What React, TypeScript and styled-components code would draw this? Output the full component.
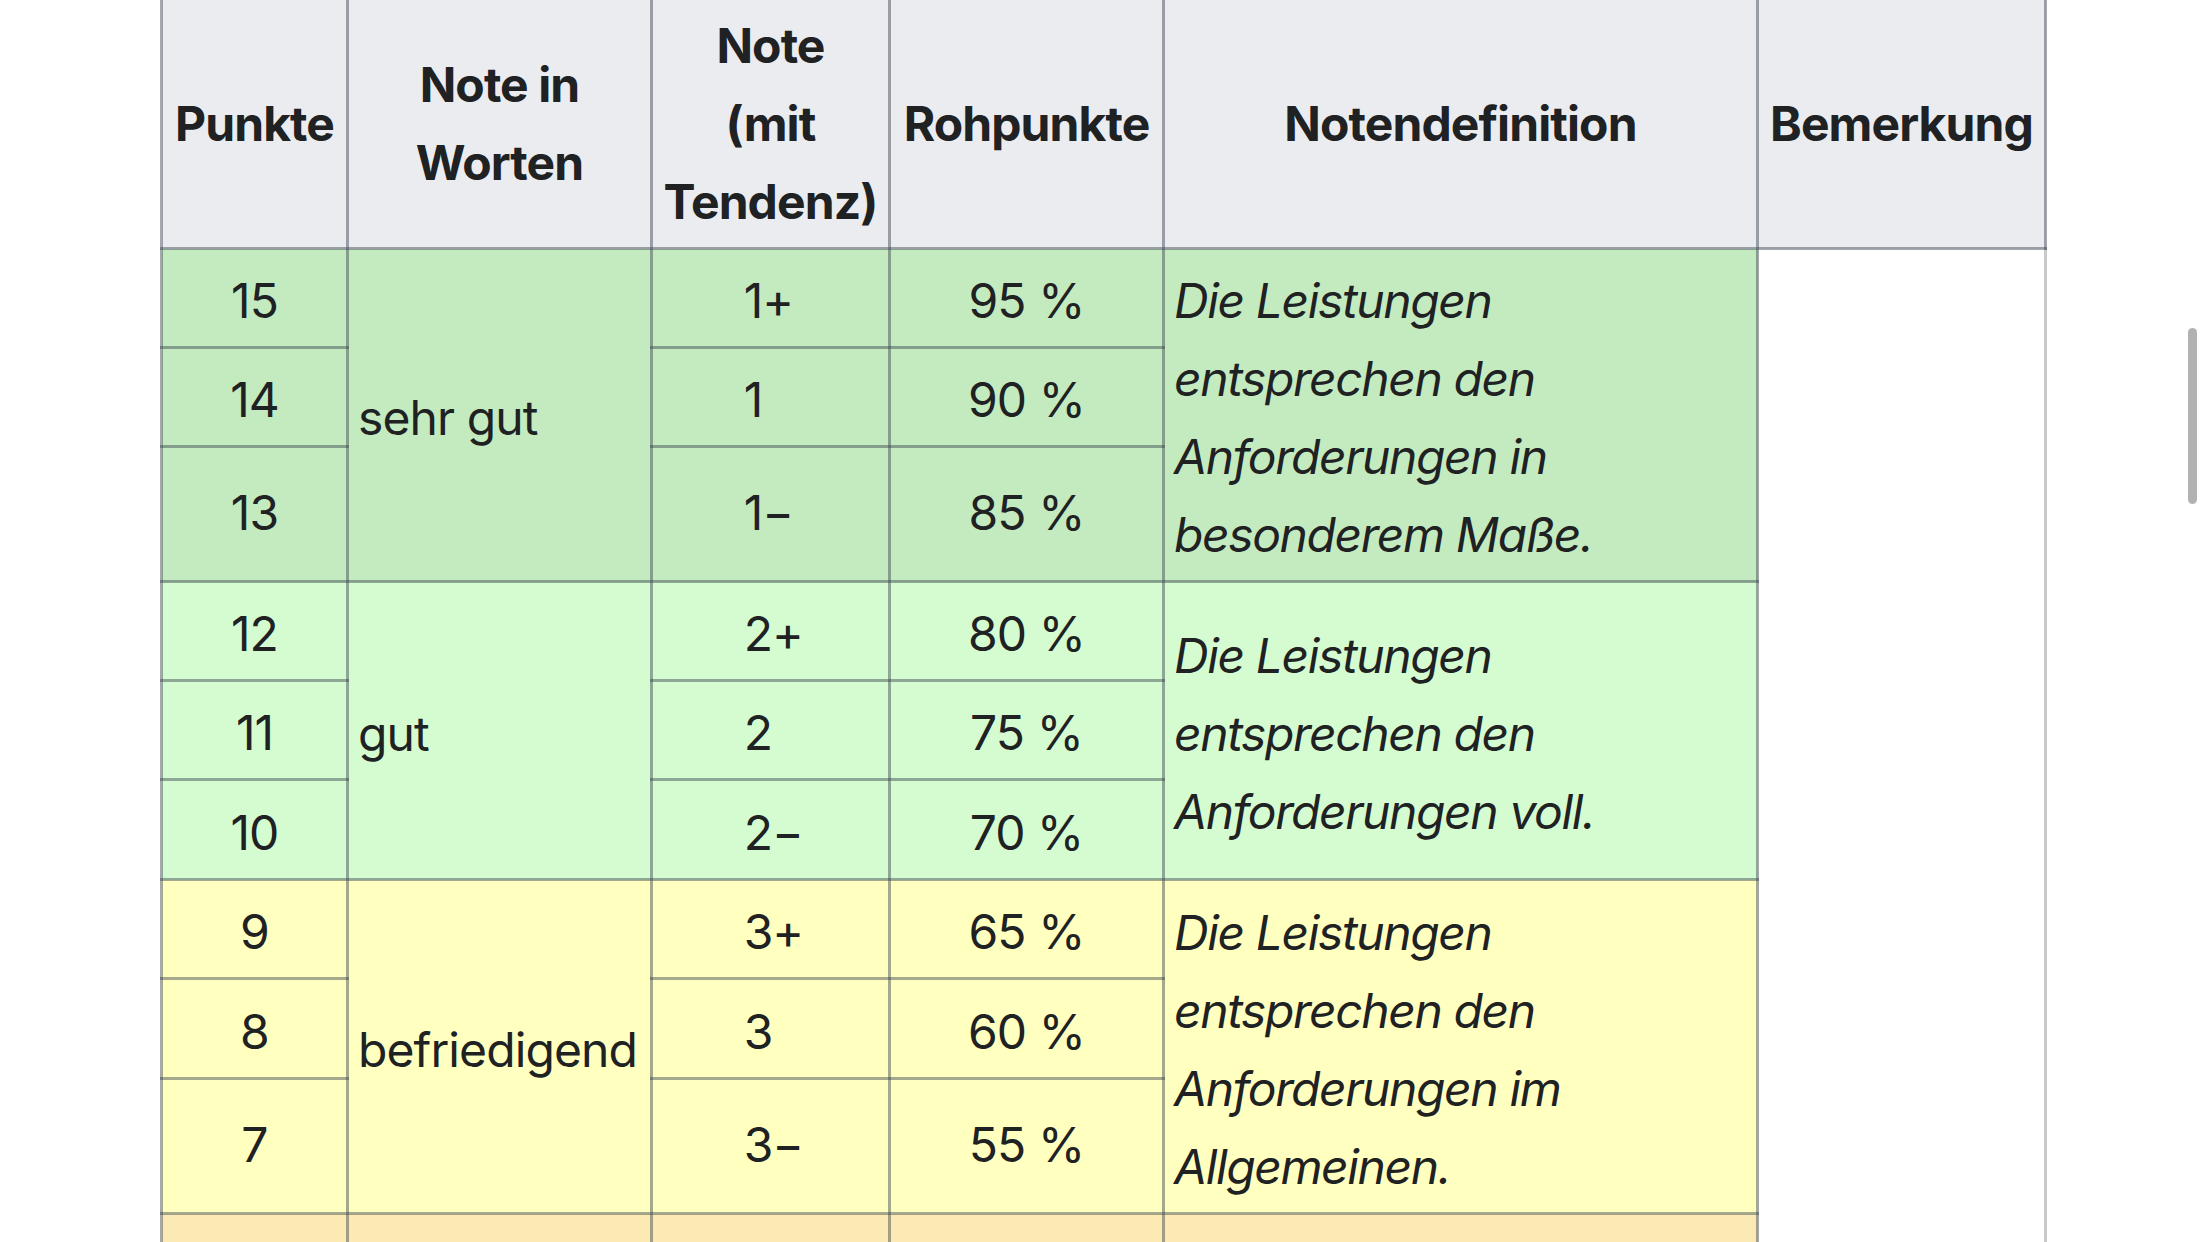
import React from "react";
import styled, { createGlobalStyle } from "styled-components";

const GlobalStyle = createGlobalStyle`
  html, body {
    margin: 0;
    padding: 0;
    background: #ffffff;
    overflow: hidden;
  }
  body {
    font-family: Inter, "Noto Sans", "Liberation Sans", sans-serif;
    color: #202122;
  }
`;

const Page = styled.main`
  position: relative;
  box-sizing: border-box;
  width: 2208px;
  height: 1242px;
  overflow: hidden;
  padding-left: 160px;
`;

const LINE = "rgba(55, 65, 75, 0.45)";

const Table = styled.table`
  border-collapse: collapse;
  table-layout: fixed;
  width: 1887px;
  margin-top: -8px;
  font-size: 48px;
  line-height: 78px;
  letter-spacing: -0.9px;
`;

const Col = styled.col<{ $w: number }>`
  width: ${(p) => p.$w}px;
`;

const HeadCell = styled.th`
  background: #eaecf0;
  border: 3px solid ${LINE};
  padding: 12px 9px 6px;
  font-weight: 700;
  text-align: center;
  vertical-align: middle;
  letter-spacing: -0.9px;
`;

const Row = styled.tr<{ $h: number }>`
  height: ${(p) => p.$h}px;
`;

const Cell = styled.td<{ $bg: string; $align?: "left" | "center"; $tall?: boolean }>`
  background: ${(p) => p.$bg};
  border: 3px solid ${LINE};
  padding: ${(p) => (p.$tall ? "8px 9px 10px" : "12px 9px 6px")};
  text-align: ${(p) => p.$align ?? "center"};
  vertical-align: middle;
  white-space: nowrap;
`;

const DefinitionCell = styled.td<{ $bg: string }>`
  background: ${(p) => p.$bg};
  border: 3px solid ${LINE};
  padding: 12px 9px 6px;
  text-align: left;
  vertical-align: middle;
  font-style: italic;
  letter-spacing: -1.4px;
`;

const RemarkCell = styled.td`
  background: #ffffff;
  border: 3px solid ${LINE};
  border-right-color: rgba(60, 60, 70, 0.28);
  padding: 9px;
  vertical-align: top;
`;

const Grade = styled.span`
  display: inline-block;
  width: 1.12em;
  text-align: left;
`;

const ScrollIndicator = styled.div`
  position: absolute;
  top: 328px;
  right: 11px;
  width: 9px;
  height: 176px;
  border-radius: 5px;
  background: rgba(0, 0, 0, 0.3);
`;

type Line = { points: number; grade: string; raw: number; h: number };
type Group = { bg: string; word: string; definition: string; rows: Line[] };

const groups: Group[] = [
  {
    bg: "#c4ebc0",
    word: "sehr gut",
    definition: "Die Leistungen entsprechen den Anforderungen in besonderem Maße.",
    rows: [
      { points: 15, grade: "1+", raw: 95, h: 99 },
      { points: 14, grade: "1", raw: 90, h: 99 },
      { points: 13, grade: "1\u2212", raw: 85, h: 135 },
    ],
  },
  {
    bg: "#d5fcd0",
    word: "gut",
    definition: "Die Leistungen entsprechen den Anforderungen voll.",
    rows: [
      { points: 12, grade: "2+", raw: 80, h: 99 },
      { points: 11, grade: "2", raw: 75, h: 99 },
      { points: 10, grade: "2\u2212", raw: 70, h: 100 },
    ],
  },
  {
    bg: "#ffffc0",
    word: "befriedigend",
    definition: "Die Leistungen entsprechen den Anforderungen im Allgemeinen.",
    rows: [
      { points: 9, grade: "3+", raw: 65, h: 98 },
      { points: 8, grade: "3", raw: 60, h: 100 },
      { points: 7, grade: "3\u2212", raw: 55, h: 135 },
    ],
  },
  {
    bg: "#fbeab3",
    word: "ausreichend",
    definition:
      "Die Leistungen weisen zwar Mängel auf, entsprechen aber im Ganzen noch den Anforderungen.",
    rows: [
      { points: 6, grade: "4+", raw: 50, h: 99 },
      { points: 5, grade: "4", raw: 45, h: 99 },
      { points: 4, grade: "4\u2212", raw: 40, h: 135 },
    ],
  },
];

const totalRows = groups.reduce((n, g) => n + g.rows.length, 0);

export default function App() {
  return (
    <>
      <GlobalStyle />
      <Page>
        <Table>
          <colgroup>
            <Col $w={186} />
            <Col $w={304} />
            <Col $w={238} />
            <Col $w={274} />
            <Col $w={594} />
            <Col $w={288} />
          </colgroup>
          <thead>
            <tr>
              <HeadCell>Punkte</HeadCell>
              <HeadCell>
                Note in
                <br />
                Worten
              </HeadCell>
              <HeadCell>
                Note
                <br />
                (mit
                <br />
                Tendenz)
              </HeadCell>
              <HeadCell>Rohpunkte</HeadCell>
              <HeadCell>Notendefinition</HeadCell>
              <HeadCell>Bemerkung</HeadCell>
            </tr>
          </thead>
          <tbody>
            {groups.map((g, gi) =>
              g.rows.map((r, ri) => {
                const tall = r.h > 120;
                return (
                  <Row key={`${gi}-${ri}`} $h={r.h}>
                    <Cell $bg={g.bg} $tall={tall}>
                      {r.points}
                    </Cell>
                    {ri === 0 && (
                      <Cell $bg={g.bg} $align="left" rowSpan={g.rows.length}>
                        {g.word}
                      </Cell>
                    )}
                    <Cell $bg={g.bg} $tall={tall}>
                      <Grade>{r.grade}</Grade>
                    </Cell>
                    <Cell $bg={g.bg} $tall={tall}>{`${r.raw}\u00a0%`}</Cell>
                    {ri === 0 && (
                      <DefinitionCell $bg={g.bg} rowSpan={g.rows.length}>
                        {g.definition}
                      </DefinitionCell>
                    )}
                    {gi === 0 && ri === 0 && <RemarkCell rowSpan={totalRows} />}
                  </Row>
                );
              })
            )}
          </tbody>
        </Table>
        <ScrollIndicator />
      </Page>
    </>
  );
}
